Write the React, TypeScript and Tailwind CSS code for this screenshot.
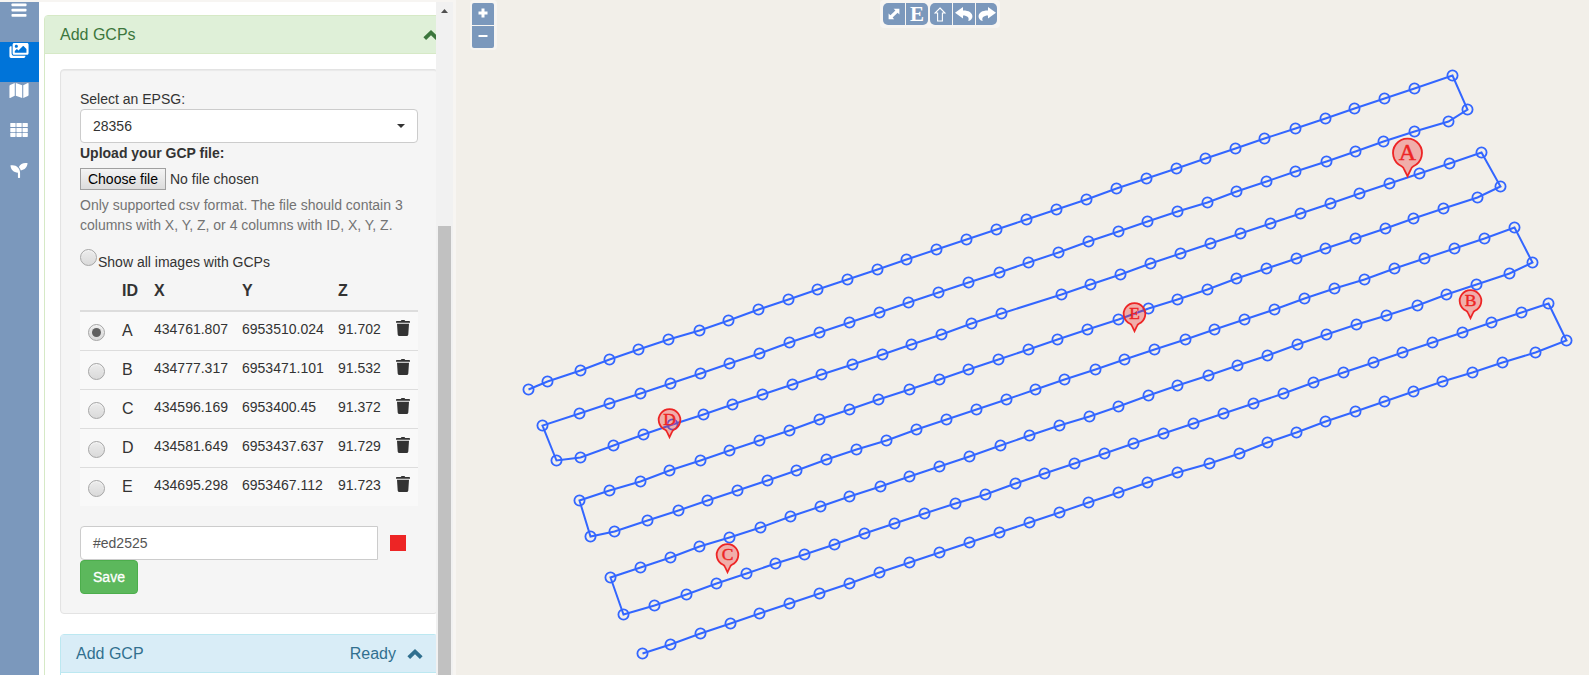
import React from "react";
import { FaImages, FaMap, FaSeedling } from "react-icons/fa";

type Point = [number, number];

const flightPath: Point[] = [
  [528,389],[547,381],[580,370],[609,359],[638,349],[668,339],[699,330],[728,320],[758,309],[788,299],[817,289],[847,279],[877,269],
  [906,259],[936,249],[966,239],[996,229],[1026,219],[1056,209],[1086,199],[1116,188],[1146,178],[1176,168],[1205,158],[1235,148],
  [1264,138],[1295,128],[1325,118],[1354,108],[1384,98],[1414,88],[1452,75],
  [1467,109],[1448,121],[1414,131],[1383,141],[1355,151],[1326,161],[1295,171],[1266,181],[1236,191],[1207,202],[1177,211],[1147,221],
  [1118,231],[1088,241],[1058,252],[1028,262],[999,272],[968,282],[938,292],[908,302],[879,312],[849,322],[819,332],[789,342],[759,353],
  [729,363],[700,373],[670,383],[640,393],[609,403],[579,413],[542,425],
  [556,460],[580,457],[613,445],[643,434],[672,424],[703,414],[732,404],[762,394],[792,384],[821,374],[852,364],[882,354],[911,344],
  [941,334],[971,323],[1001,313],[1061,294],[1090,284],[1120,274],[1150,263],[1180,253],[1210,243],[1240,233],[1270,223],[1300,213],
  [1330,203],[1359,193],[1389,183],[1419,173],[1449,163],[1481,152],
  [1500,186],[1477,197],[1443,208],[1413,218],[1385,228],[1355,238],[1325,248],[1296,258],[1266,268],[1236,278],[1207,289],[1177,299],
  [1148,308],[1118,319],[1087,329],[1057,339],[1028,349],[998,359],[968,369],[939,379],[909,389],[878,399],[849,409],[819,419],[789,430],
  [759,440],[729,450],[700,460],[669,470],[640,481],[609,490],[579,500],
  [590,536],[614,531],[647,520],[678,510],[707,500],[737,490],[767,480],[796,470],[826,459],[856,449],[886,440],[916,429],[946,419],
  [976,409],[1006,399],[1035,389],[1064,379],[1095,369],[1124,359],[1154,349],[1185,339],[1214,329],[1244,319],[1274,309],[1304,298],
  [1334,288],[1364,279],[1394,268],[1424,258],[1454,248],[1484,238],[1514,227],
  [1532,262],[1509,273],[1476,284],[1446,294],[1417,305],[1386,315],[1356,324],[1326,334],[1297,344],[1267,355],[1237,365],[1208,375],
  [1177,385],[1148,395],[1118,406],[1089,416],[1059,425],[1029,435],[1000,445],[969,456],[939,466],[909,476],[880,486],[849,496],
  [820,506],[790,516],[760,527],[729,537],[699,546],[670,557],[640,567],[610,577],
  [623,614],[654,605],[686,594],[716,583],[746,573],[775,563],[804,554],[834,544],[864,533],[894,523],[924,513],[955,503],[985,494],
  [1015,483],[1044,473],[1074,463],[1104,453],[1133,443],[1163,433],[1193,423],[1223,413],[1253,403],[1283,393],[1313,382],[1343,372],
  [1373,362],[1402,352],[1432,342],[1462,332],[1491,322],[1521,312],[1548,303],
  [1566,340],[1535,352],[1502,362],[1472,372],[1442,381],[1413,391],[1384,401],[1355,411],[1325,421],[1296,432],[1267,442],[1239,453],
  [1209,463],[1177,472],[1147,482],[1118,492],[1088,502],[1059,512],[1029,522],[999,532],[969,542],[939,552],[909,562],[879,572],
  [849,583],[819,593],[789,603],[759,613],[730,623],[700,633],[670,644],[642,653],
];

const pins = [
  { id: "A", x: 1407.5, y: 153, scale: 1.34 },
  { id: "B", x: 1470.5, y: 300.8, scale: 1 },
  { id: "C", x: 727.5, y: 554.8, scale: 1 },
  { id: "D", x: 669.5, y: 419.8, scale: 1 },
  { id: "E", x: 1134.5, y: 313.8, scale: 1 },
];

const gcps = [
  ["A", "434761.807", "6953510.024", "91.702"],
  ["B", "434777.317", "6953471.101", "91.532"],
  ["C", "434596.169", "6953400.45", "91.372"],
  ["D", "434581.649", "6953437.637", "91.729"],
  ["E", "434695.298", "6953467.112", "91.723"],
];

function Radio({ checked = false }: { checked?: boolean }) {
  return (
    <span className="flex size-[17px] shrink-0 items-center justify-center rounded-full border border-[#a6a6a6] bg-linear-to-b from-[#ececec] to-[#dadada] shadow-[inset_0_1px_1px_rgba(255,255,255,0.6)]">
      {checked && <span className="size-[9px] rounded-full bg-[#606060]" />}
    </span>
  );
}

function Trash() {
  return (
    <svg className="block h-4 w-3.5" viewBox="0 0 14 16" fill="#333">
      <path d="M4.8 0.9Q5 0 6 0H8Q9 0 9.2 0.9H13.2Q14 0.9 14 1.7V2.7H0V1.7Q0 0.9 0.8 0.9ZM1 3.7H13L12.3 14.4Q12.1 16 10.6 16H3.4Q1.9 16 1.7 14.4Z" />
    </svg>
  );
}

function ChevronUp() {
  return (
    <svg className="block h-2.5 w-4 shrink-0" viewBox="0 0 16 10" fill="currentColor">
      <path d="M8 0L15.6 7.2L12.9 9.9L8 5.2L3.1 9.9L0.4 7.2Z" />
    </svg>
  );
}

function Bars({ className }: { className?: string }) {
  return (
    <svg className={className} viewBox="0 0 20 16" fill="currentColor">
      <rect x="2.5" y="1.5" width="15" height="2.8" rx="0.8" />
      <rect x="2.5" y="6.7" width="15" height="2.8" rx="0.8" />
      <rect x="2.5" y="11.9" width="15" height="2.8" rx="0.8" />
    </svg>
  );
}

function GridCells({ className }: { className?: string }) {
  return (
    <svg className={className} viewBox="0 0 20 16" fill="currentColor">
      {[1.3, 7.4, 13.5].map((x) =>
        [1, 5.9, 10.8].map((y) => <rect key={`${x}-${y}`} x={x} y={y} width="5.3" height="4.1" rx="0.6" />),
      )}
    </svg>
  );
}

function Rail() {
  const items = [Bars, FaImages, FaMap, GridCells, FaSeedling];
  return (
    <nav className="flex w-[39px] shrink-0 flex-col bg-[#7b98bc] text-white">
      {items.map((Icon, i) => (
        <div key={i} className={i === 1 ? "h-10 bg-[#0074d9]" : "h-10"}>
          <div className="flex h-4 items-center justify-center pr-px">
            <Icon className={i === 0 || i === 3 ? "h-4 w-5 shrink-0" : "h-[17px] w-[20px] shrink-0"} />
          </div>
        </div>
      ))}
    </nav>
  );
}

function GcpTable() {
  return (
    <table className="w-[338px] table-fixed border-collapse text-left">
      <colgroup>
        <col className="w-[34px]" />
        <col className="w-8" />
        <col className="w-[88px]" />
        <col className="w-24" />
        <col className="w-[58px]" />
        <col className="w-[30px]" />
      </colgroup>
      <thead>
        <tr className="h-[39px] border-b-2 border-[#ddd] text-base font-bold">
          <th />
          <th className="pl-2 pb-px">ID</th>
          <th className="pl-2 pb-px">X</th>
          <th className="pl-2 pb-px">Y</th>
          <th className="pl-2 pb-px">Z</th>
          <th />
        </tr>
      </thead>
      <tbody>
        {gcps.map(([id, x, y, z], i) => (
          <tr key={id} className="h-[39px] border-t border-[#ddd] bg-[#f9f9f9] align-top first:border-t-0">
            <td className="pt-3 pl-2"><Radio checked={i === 0} /></td>
            <td className="pt-2 pl-2 text-base leading-[22px]">{id}</td>
            <td className="pt-[7px] pl-2 leading-5">{x}</td>
            <td className="pt-[7px] pl-2 leading-5">{y}</td>
            <td className="pt-[7px] pl-2 leading-5">{z}</td>
            <td className="pt-2 pl-2"><Trash /></td>
          </tr>
        ))}
      </tbody>
    </table>
  );
}

function Sidebar() {
  return (
    <div className="min-w-0 flex-1 overflow-hidden bg-white pt-[13px] pl-[5px]">
      <section className="h-[800px] w-[410px] rounded border border-[#d6e9c6]">
        <header className="flex h-[38px] items-center justify-between border-b border-[#d6e9c6] bg-[#dff0d8] pr-3.5 pl-[15px] text-base text-[#3c763d]">
          <span>Add GCPs</span>
          <ChevronUp />
        </header>
        <div className="p-[15px]">
          <div className="h-[545px] rounded border border-[#e3e3e3] bg-[#f5f5f5] p-[19px] shadow-[inset_0_1px_1px_rgba(0,0,0,0.05)]">
            <div className="leading-5">Select an EPSG:</div>
            <div className="flex h-[34px] items-center justify-between rounded border border-[#ccc] bg-white px-3">
              <span>28356</span>
              <svg className="h-1 w-2" viewBox="0 0 8 4" fill="#333"><path d="M0 0H8L4 4Z" /></svg>
            </div>
            <div className="leading-5 font-bold">Upload your GCP file:</div>
            <div className="mt-[5px] flex h-[22px] items-center gap-1">
              <span className="flex h-[22px] w-[86px] items-center justify-center border border-[#a0a0a0] bg-linear-to-b from-[#f4f4f4] to-[#dcdcdc] text-black">Choose file</span>
              <span>No file chosen</span>
            </div>
            <p className="mt-[5px] leading-5 whitespace-nowrap text-[#737373]">
              Only supported csv format. The file should contain 3<br />
              columns with X, Y, Z, or 4 columns with ID, X, Y, Z.
            </p>
            <div className="mt-3.5 flex h-[23px] items-start gap-px">
              <Radio />
              <span className="mt-[3px] leading-5">Show all images with GCPs</span>
            </div>
            <GcpTable />
            <div className="mt-5 flex items-center">
              <div className="flex h-[34px] w-[298px] items-center rounded-l border border-[#ccc] bg-white px-3 text-[#555]">#ed2525</div>
              <span className="ml-3 size-4 bg-[#ed2525]" />
            </div>
            <button className="block h-[34px] w-[58px] rounded border border-[#4cae4c] bg-[#5cb85c] text-white [-webkit-text-stroke:0.3px_white]">Save</button>
          </div>
          <section className="mt-5 h-40 rounded border border-[#bce8f1]">
            <header className="flex h-[38px] items-center border-b border-[#bce8f1] bg-[#d9edf7] pr-3.5 pl-[15px] text-base text-[#31708f]">
              <span>Add GCP</span>
              <span className="mr-[11px] ml-auto">Ready</span>
              <ChevronUp />
            </header>
          </section>
        </div>
      </section>
    </div>
  );
}

function ScrollBar() {
  return (
    <div className="flex w-[17px] shrink-0 flex-col items-center bg-[#f1f1f1]">
      <div className="flex h-[17px] items-center">
        <svg className="h-1 w-[7px]" viewBox="0 0 7 4" fill="#505050"><path d="M0 4L3.5 0L7 4Z" /></svg>
      </div>
      <div className="mt-[207px] w-[13px] flex-1 bg-[#c1c1c1]" />
    </div>
  );
}

function MapView() {
  return (
    <main className="relative flex-1 bg-[#f2efe9]">
      <svg className="block h-[675px] w-[1133px]" viewBox="456 0 1133 675">
        <g transform="translate(0.5 0.5)" fill="none" stroke="#3366ff">
          <polyline points={flightPath.map((p) => p.join(",")).join(" ")} strokeWidth="2" />
          {flightPath.map(([x, y]) => (
            <circle key={`${x}-${y}`} cx={x} cy={y} r="5.1" strokeWidth="1.8" />
          ))}
        </g>
        {pins.map((p) => (
          <g key={p.id} transform={`translate(${p.x} ${p.y})`}>
            <path
              transform={`scale(${p.scale})`}
              d="M0 17.3L-2.6 12Q-3 10.6 -4.4 9.9A10.8 10.8 0 1 1 4.4 9.9Q3 10.6 2.6 12Z"
              fill="#ed2525"
              fillOpacity="0.32"
              stroke="#ed2525"
              strokeWidth={1.8 / p.scale}
            />
            <text
              y={5.3 * p.scale}
              textAnchor="middle"
              fontFamily="'Liberation Serif', serif"
              fontSize={p.scale > 1 ? 24 : 17.5}
              fill="#ed2525"
              stroke="#ed2525"
              strokeWidth="0.45"
            >
              {p.id}
            </text>
          </g>
        ))}
      </svg>

      <div className="absolute top-0 left-3.5 flex w-[27px] flex-col gap-px rounded bg-white/40 p-0.5 pt-[3px]">
        <span className="flex h-[22px] w-[22px] items-center justify-center rounded-t-xs bg-[#7b98bc] pb-0.5">
          <svg className="size-[10px]" viewBox="0 0 10 10" fill="#fff"><path d="M3.5 0.5H6.5V3.5H9.5V6.5H6.5V9.5H3.5V6.5H0.5V3.5H3.5Z" /></svg>
        </span>
        <span className="flex h-[22px] w-[22px] items-center justify-center rounded-b-xs bg-[#7b98bc] pb-0.5">
          <svg className="size-[10px]" viewBox="0 0 10 10" fill="#fff"><path d="M0.5 4H9.5V6H0.5Z" /></svg>
        </span>
      </div>

      <div className="absolute top-0 left-[424px] flex w-[120px] gap-0.5 rounded bg-white/40 pt-[3px] pb-[3px] pl-[3px] text-white">
        <div className="flex h-[22px] gap-px">
          <span className="flex w-[22px] items-center justify-center rounded-l-[5px] bg-[#7b98bc]">
            <svg className="size-3" viewBox="0 0 12 12" fill="#fff"><path d="M5.6 0.8H11.4V6.4L9.6 4.8L4.6 9.4L6.2 11.2H0.6V5.6L2.4 7.2L7.4 2.6Z" /></svg>
          </span>
          <span className="flex w-[22px] items-center justify-center rounded-r-[5px] bg-[#7b98bc] font-['Liberation_Serif',serif] text-[21px] leading-[22px] font-bold">E</span>
        </div>
        <div className="flex h-[22px] gap-px">
          <span className="flex w-[22px] items-center justify-center rounded-l-[5px] bg-[#7b98bc]">
            <svg className="mr-0.5 h-[15px] w-3" viewBox="0 0 12 15" fill="none" stroke="#fff" strokeWidth="1.1"><path d="M6 1L11 6H8.4V14H3.6V6H1Z" /></svg>
          </span>
          <span className="flex w-[22px] items-center justify-center bg-[#7b98bc]">
            <svg className="h-3.5 w-[18px]" viewBox="0 0 18 14" fill="#fff"><path d="M0 5.8L8 0V3.4C13.5 3.3 17.4 5.4 17.4 9.4C17.4 11.6 16 13.3 13.2 14C14.6 10.6 12.6 8.4 8 8.4V11.6Z" /></svg>
          </span>
          <span className="flex w-[21px] items-center justify-center rounded-r-[5px] bg-[#7b98bc]">
            <svg className="h-3.5 w-[18px]" viewBox="0 0 18 14" fill="#fff"><path d="M18 5.8L10 0V3.4C4.5 3.3 0.6 5.4 0.6 9.4C0.6 11.6 2 13.3 4.8 14C3.4 10.6 5.4 8.4 10 8.4V11.6Z" /></svg>
          </span>
        </div>
      </div>
    </main>
  );
}

export default function App() {
  return (
    <div className="flex h-[675px] w-[1589px] overflow-hidden font-['Liberation_Sans',Arial,sans-serif] text-sm text-[#333]">
      <aside className="flex w-[456px] shrink-0 bg-[#f7f5f2] pt-0.5 pr-[3px]">
        <Rail />
        <Sidebar />
        <ScrollBar />
      </aside>
      <MapView />
    </div>
  );
}
